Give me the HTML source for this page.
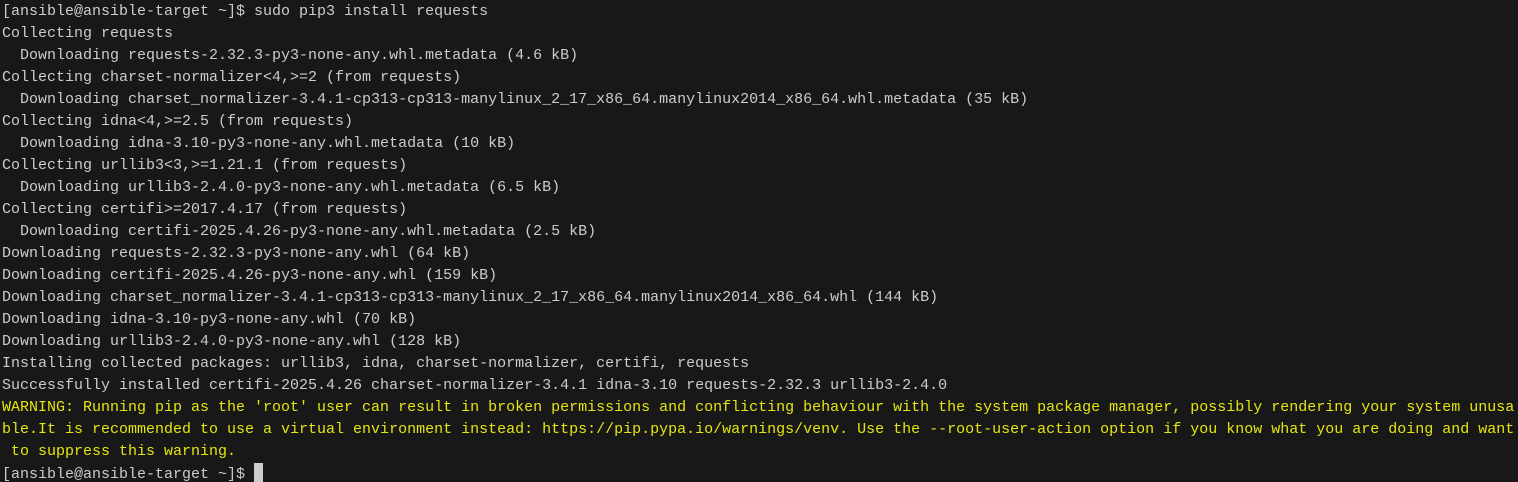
<!DOCTYPE html>
<html><head><style>
html,body{margin:0;padding:0;background:#181818;width:1518px;height:482px;overflow:hidden}
pre{margin:0;padding:1px 0 0 2px;font-family:"Liberation Mono",monospace;font-size:15px;line-height:22px;color:#cccccc;white-space:pre}
.y{color:#e5e510}
.c{display:inline-block;width:9px;height:20px;background:#cccccc;vertical-align:-5px}
</style></head><body><pre>[ansible@ansible-target ~]$ sudo pip3 install requests
Collecting requests
  Downloading requests-2.32.3-py3-none-any.whl.metadata (4.6 kB)
Collecting charset-normalizer&lt;4,&gt;=2 (from requests)
  Downloading charset_normalizer-3.4.1-cp313-cp313-manylinux_2_17_x86_64.manylinux2014_x86_64.whl.metadata (35 kB)
Collecting idna&lt;4,&gt;=2.5 (from requests)
  Downloading idna-3.10-py3-none-any.whl.metadata (10 kB)
Collecting urllib3&lt;3,&gt;=1.21.1 (from requests)
  Downloading urllib3-2.4.0-py3-none-any.whl.metadata (6.5 kB)
Collecting certifi&gt;=2017.4.17 (from requests)
  Downloading certifi-2025.4.26-py3-none-any.whl.metadata (2.5 kB)
Downloading requests-2.32.3-py3-none-any.whl (64 kB)
Downloading certifi-2025.4.26-py3-none-any.whl (159 kB)
Downloading charset_normalizer-3.4.1-cp313-cp313-manylinux_2_17_x86_64.manylinux2014_x86_64.whl (144 kB)
Downloading idna-3.10-py3-none-any.whl (70 kB)
Downloading urllib3-2.4.0-py3-none-any.whl (128 kB)
Installing collected packages: urllib3, idna, charset-normalizer, certifi, requests
Successfully installed certifi-2025.4.26 charset-normalizer-3.4.1 idna-3.10 requests-2.32.3 urllib3-2.4.0
<span class="y">WARNING: Running pip as the 'root' user can result in broken permissions and conflicting behaviour with the system package manager, possibly rendering your system unusa
ble.It is recommended to use a virtual environment instead: https://pip.pypa.io/warnings/venv. Use the --root-user-action option if you know what you are doing and want
 to suppress this warning.</span>
[ansible@ansible-target ~]$ <span class="c"></span></pre></body></html>
